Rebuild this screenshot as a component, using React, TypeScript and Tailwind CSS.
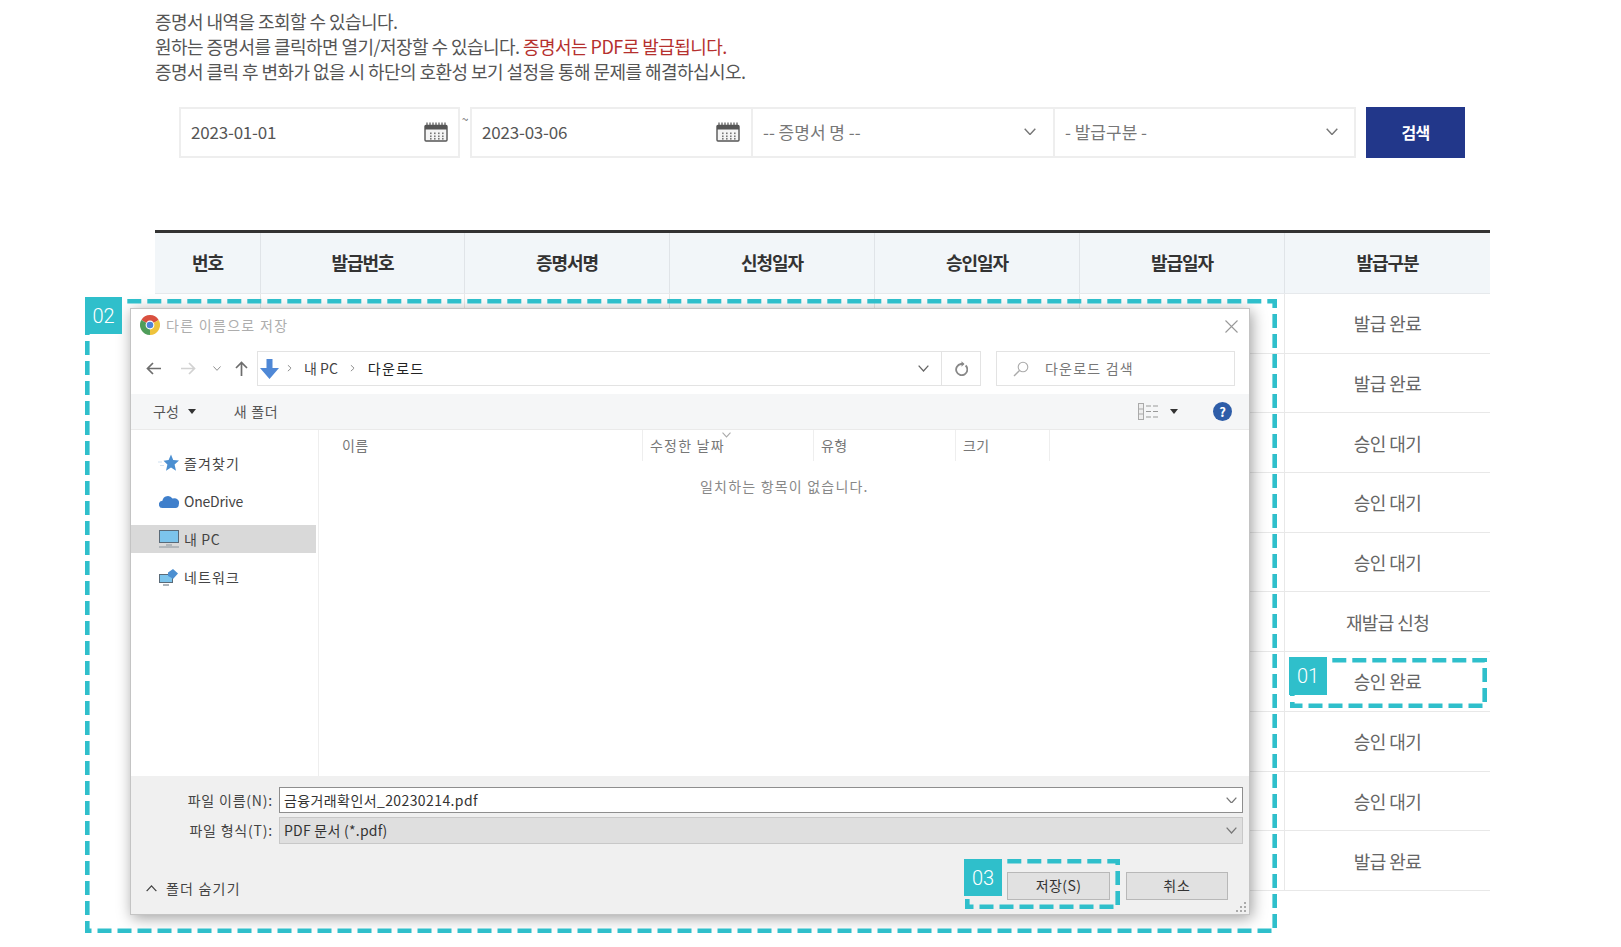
import React from "react";

const rows = ["발급 완료","발급 완료","승인 대기","승인 대기","승인 대기","재발급 신청","승인 완료","승인 대기","승인 대기","발급 완료"];
const heads = ["번호","발급번호","증명서명","신청일자","승인일자","발급일자","발급구분"];

function Cal({ className }: { className?: string }) {
  return (
    <svg className={className} width="24" height="20" viewBox="0 0 24 20" fill="none">
      <rect x="1" y="3.5" width="22" height="15.5" rx="1" fill="#f4f4f4" stroke="#555" strokeWidth="1.4" />
      <rect x="1" y="3.5" width="22" height="4" fill="#555" />
      {[3,6,9,12,15,18,21].map((x) => <path key={x} d={`M${x} 0.5V4`} stroke="#555" strokeWidth="1.2" />)}
      {[6,10,14,18].map((x) => [10.5,13.5,16].map((y) => <rect key={`${x}-${y}`} x={x} y={y} width="1.6" height="1.6" fill="#777" />))}
    </svg>
  );
}

function Chev({ className, color = "#777", w = 12 }: { className?: string; color?: string; w?: number }) {
  return (
    <svg className={className} width={w} height={w * 0.62} viewBox="0 0 12 7.4" fill="none">
      <path d="M0.7 0.7L6 6.5L11.3 0.7" stroke={color} strokeWidth="1.4" />
    </svg>
  );
}

function Badge({ label, className }: { label: string; className: string }) {
  return (
    <div className={`absolute flex items-center justify-center bg-[#2fbfcb] text-white text-[20px] font-light font-['Roboto',sans-serif] ${className}`}>{label}</div>
  );
}

function Dash({ w, h, className }: { w: number; h: number; className: string }) {
  return (
    <svg className={`absolute pointer-events-none ${className}`} width={w} height={h} viewBox={`0 0 ${w} ${h}`} fill="none">
      <rect x="2.3" y="2.3" width={w - 4.6} height={h - 4.6} stroke="#2fbfcb" strokeWidth="4.6" strokeDasharray="14 6" />
    </svg>
  );
}

function ChromeIcon() {
  return (
    <svg width="20" height="20" viewBox="0 0 20 20" fill="none" className="shrink-0">
      <path d="M3.94 6.5A7 7 0 0 1 16.06 6.5" stroke="#d9503f" strokeWidth="6" />
      <path d="M16.06 6.5A7 7 0 0 1 10 17" stroke="#eec33c" strokeWidth="6" />
      <path d="M10 17A7 7 0 0 1 3.94 6.5" stroke="#4f9d5a" strokeWidth="6" />
      <circle cx="10" cy="10" r="4.4" fill="#fff" />
      <circle cx="10" cy="10" r="3.3" fill="#4f83d8" />
    </svg>
  );
}

function Side({ icon, label, active, track }: { icon: React.ReactNode; label: string; active?: boolean; track: string }) {
  return (
    <div className={`flex h-[28px] w-[185px] items-center ${active ? "bg-[#d9d9d9]" : ""}`}>
      <div className="flex w-[53px] shrink-0 justify-end pr-[5px]">{icon}</div>
      <span className={`text-[14px] text-[#444] ${track}`}>{label}</span>
    </div>
  );
}

export default function App() {
  return (
    <div className="relative h-[947px] w-[1621px] overflow-hidden bg-white font-['Noto_Sans_CJK_KR',sans-serif]">
      <div className="w-[1490px] pl-[155px] pt-[9px]">
        <div className="text-[18px] leading-[25px] tracking-[-0.55px] text-[#555]">
          <p>증명서 내역을 조회할 수 있습니다.</p>
          <p>원하는 증명서를 클릭하면 열기/저장할 수 있습니다. <span className="text-[#b5302e]">증명서는 PDF로 발급됩니다.</span></p>
          <p>증명서 클릭 후 변화가 없을 시 하단의 호환성 보기 설정을 통해 문제를 해결하십시오.</p>
        </div>

        <div className="ml-[24px] mt-[23px] flex h-[51px] items-stretch text-[17px] text-[#555]">
          <div className="flex w-[281px] items-center justify-between border-2 border-[#eeeeee] pb-[2px] pl-[10px] pr-[10px] tracking-[-0.2px]">
            <span>2023-01-01</span>
            <Cal />
          </div>
          <div className="w-[10px] pt-[2px] text-center text-[12px] leading-[20px] text-[#666]">~</div>
          <div className="flex w-[283px] items-center justify-between border-2 border-[#eeeeee] pb-[2px] pl-[10px] pr-[11px] tracking-[-0.2px]">
            <span>2023-03-06</span>
            <Cal />
          </div>
          <div className="flex w-[302px] items-center justify-between border-y-2 border-r-2 border-[#eeeeee] pb-[2px] pl-[10px] pr-[17px] text-[17px] text-[#777]">
            <span>-- 증명서 명 --</span>
            <Chev />
          </div>
          <div className="flex w-[301px] items-center justify-between border-y-2 border-r-2 border-[#eeeeee] pb-[2px] pl-[10px] pr-[16px] text-[17px] text-[#777]">
            <span>- 발급구분 -</span>
            <Chev />
          </div>
          <div className="ml-[10px] flex w-[99px] items-center justify-center bg-[#22378a] pb-[2px] text-[16px] font-bold tracking-[-0.8px] text-white">검색</div>
        </div>

        <div className="mt-[72px] border-t-[3px] border-[#333]">
          <div className="grid h-[61px] grid-cols-[106px_204px_205px_205px_205px_205px_205px] border-b border-[#e6e9ec] bg-[#f2f6f9]">
            {heads.map((h, i) => (
              <div key={h} className={`flex items-center justify-center pb-[2px] text-[18px] font-bold tracking-[-1px] text-[#333] ${i < 6 ? "border-r border-[#e0e4e8]" : ""}`}>{h}</div>
            ))}
          </div>
          {rows.map((r, idx) => (
            <div key={idx} className="grid h-[59.7px] grid-cols-[106px_204px_205px_205px_205px_205px_205px] border-b border-[#e8e8e8]">
              {[0,1,2,3,4,5].map((i) => <div key={i} className="border-r border-[#e8e8e8]" />)}
              <div className="flex items-center justify-center pt-[1px] text-[18px] tracking-[-0.6px] text-[#666]">{r}</div>
            </div>
          ))}
        </div>
      </div>

      {/* save dialog */}
      <div className="absolute left-[130px] top-[308px] flex h-[607px] w-[1120px] flex-col border border-[#c4c4c4] bg-white shadow-[2px_3px_14px_rgba(0,0,0,0.38)]">
        <div className="flex h-[42px] shrink-0 items-start pl-[9px] pr-[11px] pt-[6px]">
          <ChromeIcon />
          <span className="ml-[6px] text-[14px] leading-[20px] tracking-[1.3px] text-[#adadad]">다른 이름으로 저장</span>
          <svg className="ml-auto mt-[5px]" width="13" height="13" viewBox="0 0 13 13" fill="none"><path d="M0.5 0.5L12.5 12.5M12.5 0.5L0.5 12.5" stroke="#999" strokeWidth="1.1" /></svg>
        </div>

        <div className="flex h-[35px] shrink-0 items-center pl-[15px]">
          <svg width="15" height="13" viewBox="0 0 15 13" fill="none"><path d="M7 1L1.5 6.5L7 12M1.5 6.5H15" stroke="#6d6d6d" strokeWidth="1.7" /></svg>
          <svg className="ml-[20px]" width="15" height="13" viewBox="0 0 15 13" fill="none"><path d="M8 1L13.5 6.5L8 12M13.5 6.5H0" stroke="#d2d2d2" strokeWidth="1.7" /></svg>
          <Chev className="ml-[17px]" w={8} color="#888" />
          <svg className="ml-[14px]" width="13" height="15" viewBox="0 0 13 15" fill="none"><path d="M1 7L6.5 1.5L12 7M6.5 1.5V15" stroke="#6d6d6d" strokeWidth="1.7" /></svg>
          <div className="ml-[9px] flex h-[35px] w-[724px] items-center border border-[#e3e3e3]">
            <svg className="ml-[2px]" width="19" height="20" viewBox="0 0 19 20"><path d="M6.5 0H12.5V9H19L9.5 20L0 9H6.5Z" fill="#4f88d6" /></svg>
            <Chev className="ml-[7px] -rotate-90" w={7} color="#777" />
            <span className="ml-[11px] text-[14px] text-[#444]">내 PC</span>
            <Chev className="ml-[11px] -rotate-90" w={7} color="#777" />
            <span className="ml-[12px] text-[14px] tracking-[1.3px] text-[#222]">다운로드</span>
            <Chev className="ml-auto mr-[12px]" w={11} color="#666" />
            <div className="flex h-full w-[39px] items-center justify-center border-l border-[#e3e3e3]">
              <svg width="14" height="15" viewBox="0 0 14 15" fill="none"><path d="M11.6 4.5A5.6 5.6 0 1 1 7 3H9.5" stroke="#888" strokeWidth="1.8" /><path d="M7.5 0.3L10.5 3L7.5 5.7Z" fill="#888" /></svg>
            </div>
          </div>
          <div className="ml-[15px] flex h-[35px] w-[239px] items-center border border-[#e3e3e3] pl-[16px]">
            <svg width="16" height="16" viewBox="0 0 16 16" fill="none"><circle cx="10" cy="6" r="4.8" stroke="#aaa" strokeWidth="1.1" /><path d="M6.5 9.5L1 15" stroke="#aaa" strokeWidth="1.4" /></svg>
            <span className="ml-[16px] text-[14px] tracking-[1.2px] text-[#777]">다운로드 검색</span>
          </div>
        </div>

        <div className="mt-[8px] flex h-[36px] shrink-0 items-center border-b border-[#eaeaea] bg-[#f5f6f7] pl-[22px] text-[14px] text-[#555]">
          <span>구성</span>
          <svg className="ml-[9px]" width="8" height="5" viewBox="0 0 8 5"><path d="M0 0H8L4 5Z" fill="#333" /></svg>
          <span className="ml-[38px] tracking-[0.7px]">새 폴더</span>
          <svg className="ml-auto" width="20" height="17" viewBox="0 0 20 17" fill="none">
            <rect x="0.5" y="0.5" width="5" height="16" fill="#eee" stroke="#aaa" />
            <path d="M1 6H5M1 11H5" stroke="#aaa" />
            <path d="M8 3H13M15 3H20M8 8.5H13M15 8.5H20M8 14H13M15 14H20" stroke="#999" strokeWidth="1.2" />
          </svg>
          <svg className="ml-[12px]" width="8" height="5" viewBox="0 0 8 5"><path d="M0 0H8L4 5Z" fill="#333" /></svg>
          <div className="ml-[35px] mr-[17px] flex h-[19px] w-[19px] items-center justify-center rounded-full bg-[#2e5da8] text-[13px] font-bold leading-none text-white">?</div>
        </div>

        <div className="flex min-h-0 flex-1">
          <div className="flex w-[188px] shrink-0 flex-col gap-[10px] border-r border-[#eeeeee] pt-[19px]">
            <Side track="tracking-[1.1px]" label="즐겨찾기" icon={<svg width="21" height="18" viewBox="0 0 21 18"><path d="M13 0.5L15.2 6L21 6.6L16.6 10.4L18 16.8L13 13.4L8 16.8L9.4 10.4L5.5 6.8L10.6 6Z" fill="#4b8fd1" /><path d="M0 8H4M2 11.5H6" stroke="#cfe0f0" /></svg>} />
            <Side track="tracking-[-0.2px]" label="OneDrive" icon={<svg width="20" height="13" viewBox="0 0 20 13"><path d="M3.6 13A3.6 3.6 0 0 1 3.4 5.8A5.5 5.5 0 0 1 13.5 3.6A4.7 4.7 0 0 1 19.8 9.5A3.5 3.5 0 0 1 16.5 13Z" fill="#3f7fcb" /></svg>} />
            <Side track="tracking-[0.6px]" active label="내 PC" icon={<svg width="20" height="18" viewBox="0 0 20 18" fill="none"><rect x="0.5" y="0.5" width="19" height="12" fill="#7cc4ec" stroke="#5a6a78" /><path d="M7 15H13M0 17H20" stroke="#8a949c" /></svg>} />
            <Side track="tracking-[1.1px]" label="네트워크" icon={<svg width="20" height="18" viewBox="0 0 20 18" fill="none"><rect x="0.5" y="6.5" width="13" height="8" fill="#7cc4ec" stroke="#5a6a78" /><path d="M4 17H10" stroke="#5a6a78" /><path d="M9 4.5L14 1L19 5.5L14 11L12 9.5L9 8Z" fill="#4b8fd1" /></svg>} />
          </div>
          <div className="relative flex-1">
            <div className="flex h-[31px] text-[14px] leading-[30px] tracking-[0.3px] text-[#777]">
              <div className="w-[324px] border-r border-[#eeeeee] pl-[23px]">이름</div>
              <div className="relative w-[171px] border-r border-[#eeeeee] pl-[7px] tracking-[1.2px]">
                수정한 날짜
                <Chev className="absolute left-[79px] top-[2px]" w={9} color="#aaa" />
              </div>
              <div className="w-[142px] border-r border-[#eeeeee] pl-[7px]">유형</div>
              <div className="w-[94px] border-r border-[#eeeeee] pl-[7px]">크기</div>
            </div>
            <div className="pl-[381px] pt-[15px] text-[14px] leading-[20px] tracking-[1.2px] text-[#888]">일치하는 항목이 없습니다.</div>
          </div>
        </div>

        <div className="relative h-[138px] shrink-0 bg-[#f0f0f0] pr-[6px] pt-[11px] text-[14px] text-[#444]">
          <div className="flex h-[26px] items-center">
            <div className="w-[142px] shrink-0 text-right tracking-[0.8px]">파일 이름(N):</div>
            <div className="ml-[6px] flex h-full flex-1 items-center justify-between border border-[#8e8e8e] bg-white pl-[4px] pr-[5px] text-[#333]">
              <span className="tracking-[0.4px]">금융거래확인서_20230214.pdf</span>
              <Chev w={11} color="#777" />
            </div>
          </div>
          <div className="mt-[4px] flex h-[27px] items-center">
            <div className="w-[142px] shrink-0 text-right tracking-[0.8px]">파일 형식(T):</div>
            <div className="ml-[6px] flex h-full flex-1 items-center justify-between border border-[#c8c8c8] bg-[#dfdfdf] pl-[4px] pr-[5px] text-[#333]">
              <span className="tracking-[0.25px]">PDF 문서 (*.pdf)</span>
              <Chev w={11} color="#777" />
            </div>
          </div>
          <div className="mt-[28px] flex h-[28px] items-center pl-[15px] pr-[15px]">
            <Chev className="mt-[4px] rotate-180" w={11} color="#444" />
            <span className="ml-[9px] pt-[4px] tracking-[1.2px]">폴더 숨기기</span>
            <div className="ml-auto flex h-full w-[103px] items-center justify-center border border-[#b8b8b8] bg-[#e1e1e1] pb-[1px] tracking-[0.4px] text-[#333]">저장(S)</div>
            <div className="ml-[16px] flex h-full w-[102px] items-center justify-center border border-[#b8b8b8] bg-[#e1e1e1] pb-[1px] tracking-[0.8px] text-[#333]">취소</div>
          </div>
          <svg className="absolute bottom-[1px] right-[2px]" width="11" height="11" viewBox="0 0 11 11"><g fill="#aaa">{[[8,0],[4,4],[8,4],[0,8],[4,8],[8,8]].map(([x,y]) => <rect key={`${x}${y}`} x={x} y={y} width="2" height="2" />)}</g></svg>
        </div>
      </div>

      <Dash w={1192} h={634} className="left-[85px] top-[299px]" />
      <Badge label="02" className="left-[85px] top-[297px] h-[37px] w-[37px]" />
      <Dash w={197} h={50} className="left-[1290px] top-[658px]" />
      <Badge label="01" className="left-[1289px] top-[657px] h-[38px] w-[38px]" />
      <Dash w={155} h={50} className="left-[965px] top-[859px]" />
      <Badge label="03" className="left-[964px] top-[859px] h-[37px] w-[38px]" />
    </div>
  );
}
